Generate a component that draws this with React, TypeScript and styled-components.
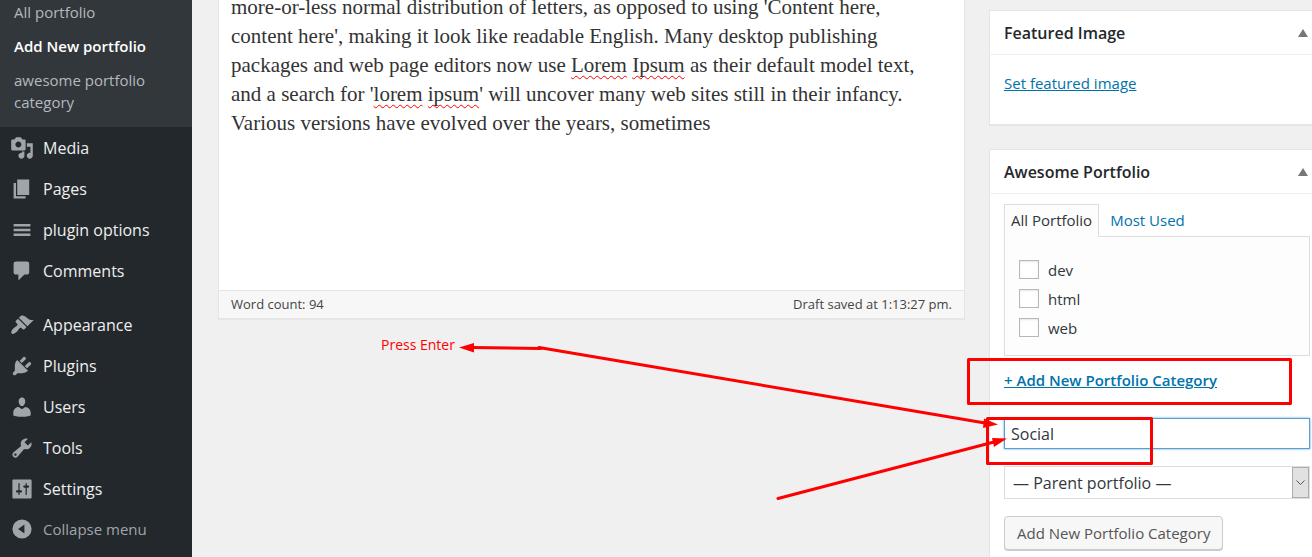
import React from "react";
import styled, { createGlobalStyle } from "styled-components";

const sans = `"Open Sans", "Noto Sans", sans-serif`;
const serif = `"Liberation Serif", Georgia, serif`;

const GlobalStyle = createGlobalStyle`
  * { box-sizing: border-box; }
  body { margin: 0; background: #f0f0f0; font-family: ${sans}; color: #32373c; overflow: hidden; }
  p, h2, ul { margin: 0; padding: 0; }
  ul { list-style: none; }
  button, input, select { font-family: inherit; margin: 0; }
`;

const Shell = styled.div`
  position: relative;
  display: flex;
  min-height: 100vh;
  overflow: hidden;
`;

const Sidebar = styled.nav`
  flex: none;
  width: 192px;
  background: #23282d;
`;

const Submenu = styled.ul`
  margin-top: -5px;
  padding-bottom: 8px;
  background: #32373c;
`;

const SubLink = styled.a<{ $current?: boolean }>`
  display: block;
  padding: 6px 14px;
  font-size: 15px;
  line-height: 22px;
  font-weight: ${(p) => (p.$current ? 600 : 400)};
  color: ${(p) => (p.$current ? "#fff" : "#b4b9be")};
  text-decoration: none;
`;

const MenuGroup = styled.ul`
  margin-bottom: 13px;
`;

const MenuLink = styled.a`
  display: flex;
  align-items: center;
  gap: 9px;
  height: 41px;
  padding: 0 10px;
  font-size: 16px;
  color: #eee;
  text-decoration: none;
`;

const CollapseButton = styled.button`
  display: flex;
  align-items: center;
  gap: 9px;
  width: 100%;
  height: 39px;
  padding: 0 10px;
  border: 0;
  background: none;
  font-size: 15px;
  color: #a0a5aa;
`;

const Icon = styled.svg`
  flex: none;
  width: 24px;
  height: 24px;
  fill: #a0a5aa;
`;

const Content = styled.main`
  flex: 1;
  display: flex;
  align-items: flex-start;
  gap: 24px;
  min-width: 0;
  padding-left: 26px;
`;

const Editor = styled.section`
  flex: 1;
  min-width: 0;
  border: 1px solid #e5e5e5;
  border-top: 0;
  background: #fff;
  box-shadow: 0 1px 1px rgba(0, 0, 0, 0.04);
`;

const EditorText = styled.div`
  min-height: 297px;
  margin-top: -7px;
  padding: 0 12px;
  font-family: ${serif};
  font-size: 21px;
  line-height: 29px;
  color: #333;
  white-space: nowrap;
`;

const Misspelt = styled.span`
  text-decoration: underline wavy #f00 1px;
  text-decoration-skip-ink: none;
  text-underline-offset: 3px;
`;

const StatusBar = styled.footer`
  display: flex;
  justify-content: space-between;
  padding: 0 12px;
  border-top: 1px solid #e5e5e5;
  background: #f7f7f7;
  font-size: 13px;
  line-height: 27px;
  color: #444;
`;

const Boxes = styled.aside`
  flex: none;
  display: flex;
  flex-direction: column;
  gap: 24px;
  width: 323px;
  padding-top: 10px;
`;

const Box = styled.section`
  border: 1px solid #e5e5e5;
  border-right: 0;
  background: #fff;
  box-shadow: 0 1px 1px rgba(0, 0, 0, 0.04);
`;

const BoxHeader = styled.header`
  display: flex;
  align-items: center;
  justify-content: space-between;
  height: 44px;
  padding: 0 3px 0 14px;
  border-bottom: 1px solid #eee;
`;

const BoxTitle = styled.h2`
  font-size: 16px;
  line-height: 24px;
  font-weight: 600;
  color: #23282d;
`;

const Toggle = styled.button`
  display: flex;
  padding: 0;
  border: 0;
  background: none;
`;

const FeaturedBody = styled.div`
  height: 69px;
  padding: 16px 14px;
  font-size: 15px;
  line-height: 24px;
`;

const BoxBody = styled.div`
  padding: 10px 2px 16px 14px;
`;

const Link = styled.a`
  color: #0073aa;
`;

const Tabs = styled.div`
  display: flex;
`;

const Tab = styled.button<{ $active?: boolean }>`
  height: 33px;
  margin-bottom: -1px;
  padding: 0 6px 2px;
  border: 1px solid ${(p) => (p.$active ? "#ddd" : "transparent")};
  border-bottom: 0;
  background: ${(p) => (p.$active ? "#fdfdfd" : "transparent")};
  font-size: 15px;
  color: ${(p) => (p.$active ? "#32373c" : "#0073aa")};
  position: relative;
  & + & { margin-left: 4px; }
`;

const Panel = styled.div`
  height: 120px;
  padding: 18px 14px 0;
  border: 1px solid #ddd;
  background: #fdfdfd;
`;

const Choice = styled.label`
  display: flex;
  align-items: center;
  gap: 9px;
  height: 29px;
  font-size: 15px;
`;

const Checkbox = styled.input`
  appearance: none;
  width: 20px;
  height: 19px;
  border: 1px solid #b4b9be;
  background: #fff;
  box-shadow: inset 0 1px 2px rgba(0, 0, 0, 0.1);
`;

const AddLine = styled.p`
  padding: 13px 0 26px;
  font-size: 15px;
  line-height: 23px;
  font-weight: 600;
`;

const NameInput = styled.input`
  display: block;
  width: 100%;
  height: 31px;
  padding: 0 6px;
  border: 1px solid #5b9dd9;
  outline: 0;
  background: #fff;
  box-shadow: 0 0 2px rgba(30, 140, 190, 0.8);
  font-size: 16px;
  color: #32373c;
`;

const SelectWrap = styled.div`
  display: grid;
  align-items: stretch;
  margin: 17px 0;
  border: 1px solid #ddd;
  background: #fff;
  & > * { grid-area: 1 / 1; }
`;

const Select = styled.select`
  appearance: none;
  height: 31px;
  padding: 0 24px 0 8px;
  border: 0;
  background: none;
  font-size: 16px;
  color: #32373c;
`;

const SelectArrow = styled.span`
  justify-self: end;
  display: flex;
  align-items: center;
  justify-content: center;
  width: 17px;
  border: 1px solid #adadad;
  background: #e1e1e1;
  pointer-events: none;
`;

const AddButton = styled.button`
  display: block;
  height: 34px;
  padding: 0 12px;
  border: 1px solid #ccc;
  border-radius: 4px;
  background: #f7f7f7;
  box-shadow: 0 1px 0 #ccc;
  font-size: 15px;
  color: #555;
`;

const Markup = styled.svg`
  position: absolute;
  top: 0;
  left: 0;
  width: 1312px;
  height: 557px;
  pointer-events: none;
`;

const Note = styled.span`
  position: absolute;
  top: 336px;
  left: 381px;
  font-size: 14px;
  line-height: 18px;
  color: #f00;
`;

const icons = {
  media:
    "M13 11V4c0-.55-.45-1-1-1h-1.67L9 1H5L3.67 3H2c-.55 0-1 .45-1 1v7c0 .55.45 1 1 1h10c.55 0 1-.45 1-1zM7 4.5c1.38 0 2.5 1.12 2.5 2.5S8.38 9.5 7 9.5 4.5 8.38 4.5 7 5.62 4.5 7 4.5zM14 6h5v10.5c0 1.38-1.12 2.5-2.5 2.5S14 17.88 14 16.5s1.12-2.5 2.5-2.5c.17 0 .34.02.5.05V9h-3V6zm-4 8.05V13h2v3.5c0 1.38-1.12 2.5-2.5 2.5S7 17.88 7 16.5 8.12 14 9.5 14c.17 0 .34.02.5.05z",
  pages: "M6 15V2h10v13H6zm-1 1h8v2H3V5h2v11z",
  menu: "M17 7V5H3v2h14zm0 4V9H3v2h14zm0 4v-2H3v2h14z",
  comments:
    "M5 2h9q.82 0 1.41.59T16 4v7q0 .82-.59 1.41T14 13h-2l-5 5v-5H5q-.82 0-1.41-.59T3 11V4q0-.82.59-1.41T5 2z",
  appearance:
    "M14.48 11.06L7.41 3.99l1.5-1.5c.5-.56 2.3-.47 3.51.32 1.21.8 1.43 1.28 2.91 2.1 1.18.64 2.45 1.26 4.45.85zm-.71.71L6.7 4.7 4.93 6.47c-.39.39-.39 1.02 0 1.41l1.06 1.06c.39.39.39 1.03 0 1.42-.6.6-1.43 1.11-2.21 1.69-.35.26-.7.53-1.01.84C1.43 14.23.4 16.08 1.4 17.07c.99 1 2.84-.03 4.18-1.36.31-.31.58-.66.85-1.02.57-.78 1.08-1.61 1.69-2.21.39-.39 1.02-.39 1.41 0l1.06 1.06c.39.39 1.02.39 1.41 0z",
  plugins:
    "M13.11 4.36L9.87 7.6 8 5.73l3.24-3.24c.35-.34 1.05-.2 1.56.32.52.51.66 1.21.31 1.55zm-8 1.77l.91-1.12 9.01 9.01-1.19.84c-.71.71-2.63 1.16-3.82 1.16H6.14L4.9 17.26c-.59.59-1.54.59-2.12 0-.59-.58-.59-1.53 0-2.12l1.24-1.24v-3.88c0-1.13.4-3.19 1.09-3.89zm7.26 3.97l3.24-3.24c.34-.35 1.04-.21 1.55.31.52.51.66 1.21.31 1.55l-3.24 3.25z",
  users:
    "M10 9.25c-2.27 0-2.73-3.44-2.73-3.44C7 4.02 7.82 2 9.97 2c2.16 0 2.98 2.02 2.71 3.81 0 0-.41 3.44-2.68 3.44zm0 2.57L12.72 10c2.39 0 4.52 2.33 4.52 4.53v2.49s-3.65 1.13-7.24 1.13c-3.65 0-7.24-1.13-7.24-1.13v-2.49c0-2.25 1.94-4.48 4.47-4.48z",
  tools:
    "M16.68 9.77c-1.34 1.34-3.3 1.67-4.95.99l-5.41 6.52c-.99.99-2.59.99-3.58 0s-.99-2.59 0-3.57l6.52-5.42c-.68-1.65-.35-3.61.99-4.95 1.28-1.28 3.12-1.62 4.72-1.06l-2.89 2.89 2.82 2.82 2.86-2.87c.53 1.58.18 3.39-1.08 4.65zM3.81 16.21c.4.39 1.04.39 1.43 0 .4-.4.4-1.04 0-1.43-.39-.4-1.03-.4-1.43 0-.39.39-.39 1.03 0 1.43z",
  settings:
    "M18 17V3c0-.55-.45-1-1-1H3c-.55 0-1 .45-1 1v14c0 .55.45 1 1 1h14c.55 0 1-.45 1-1zM8 11h1c.55 0 1 .45 1 1s-.45 1-1 1H8v1.5c0 .28-.22.5-.5.5s-.5-.22-.5-.5V13H6c-.55 0-1-.45-1-1s.45-1 1-1h1V5.5c0-.28.22-.5.5-.5s.5.22.5.5V11zm5-2h-1c-.55 0-1-.45-1-1s.45-1 1-1h1V5.5c0-.28.22-.5.5-.5s.5.22.5.5V7h1c.55 0 1 .45 1 1s-.45 1-1 1h-1v5.500c0 .28-.22.5-.5.5s-.5-.22-.5-.5V9z",
  collapse:
    "M10 2a8 8 0 1 0 0 16A8 8 0 1 0 10 2zM12 6.2v7.600L6.800 10z",
};

type IconName = keyof typeof icons;

const MenuIcon = ({ name }: { name: IconName }) => (
  <Icon viewBox="0 0 20 20" aria-hidden="true">
    <path d={icons[name]} fillRule="evenodd" />
  </Icon>
);

const contentMenu: [IconName, string][] = [
  ["media", "Media"],
  ["pages", "Pages"],
  ["menu", "plugin options"],
  ["comments", "Comments"],
];

const adminMenu: [IconName, string][] = [
  ["appearance", "Appearance"],
  ["plugins", "Plugins"],
  ["users", "Users"],
  ["tools", "Tools"],
  ["settings", "Settings"],
];

const MenuItems = ({ items }: { items: [IconName, string][] }) => (
  <>
    {items.map(([icon, label]) => (
      <li key={label}>
        <MenuLink href="#">
          <MenuIcon name={icon} />
          {label}
        </MenuLink>
      </li>
    ))}
  </>
);

const MetaBoxHeader = ({ title }: { title: string }) => (
  <BoxHeader>
    <BoxTitle>{title}</BoxTitle>
    <Toggle aria-label={`Toggle ${title}`}>
      <svg width="12" height="8" viewBox="0 0 12 8" fill="#72777c">
        <path d="M1 8L6 0l5 8z" />
      </svg>
    </Toggle>
  </BoxHeader>
);

export default function App() {
  return (
    <Shell>
      <GlobalStyle />
      <Sidebar>
        <Submenu>
          <li><SubLink href="#">All portfolio</SubLink></li>
          <li><SubLink href="#" $current>Add New portfolio</SubLink></li>
          <li><SubLink href="#">awesome portfolio category</SubLink></li>
        </Submenu>
        <MenuGroup>
          <MenuItems items={contentMenu} />
        </MenuGroup>
        <ul>
          <MenuItems items={adminMenu} />
        </ul>
        <CollapseButton>
          <MenuIcon name="collapse" />
          Collapse menu
        </CollapseButton>
      </Sidebar>

      <Content>
        <Editor>
          <EditorText>
            <p>
              more-or-less normal distribution of letters, as opposed to using 'Content here,<br />
              content here', making it look like readable English. Many desktop publishing<br />
              packages and web page editors now use <Misspelt>Lorem</Misspelt> <Misspelt>Ipsum</Misspelt> as their default model text,<br />
              and a search for '<Misspelt>lorem</Misspelt> <Misspelt>ipsum</Misspelt>' will uncover many web sites still in their infancy.<br />
              Various versions have evolved over the years, sometimes
            </p>
          </EditorText>
          <StatusBar>
            <span>Word count: 94</span>
            <span>Draft saved at 1:13:27 pm.</span>
          </StatusBar>
        </Editor>

        <Boxes>
          <Box>
            <MetaBoxHeader title="Featured Image" />
            <FeaturedBody>
              <Link href="#">Set featured image</Link>
            </FeaturedBody>
          </Box>
          <Box>
            <MetaBoxHeader title="Awesome Portfolio" />
            <BoxBody>
              <Tabs>
                <Tab $active>All Portfolio</Tab>
                <Tab>Most Used</Tab>
              </Tabs>
              <Panel>
                {["dev", "html", "web"].map((name) => (
                  <Choice key={name}>
                    <Checkbox type="checkbox" />
                    {name}
                  </Choice>
                ))}
              </Panel>
              <AddLine>
                <Link href="#">+ Add New Portfolio Category</Link>
              </AddLine>
              <NameInput type="text" aria-label="New category name" defaultValue="Social" />
              <SelectWrap>
                <Select aria-label="Parent portfolio">
                  <option>— Parent portfolio —</option>
                </Select>
                <SelectArrow>
                  <svg width="9" height="6" viewBox="0 0 9 6" fill="none" stroke="#555">
                    <path d="M.5 .5l4 4 4-4" />
                  </svg>
                </SelectArrow>
              </SelectWrap>
              <AddButton>Add New Portfolio Category</AddButton>
            </BoxBody>
          </Box>
        </Boxes>
      </Content>

      <Markup viewBox="0 0 1312 557" fill="none" stroke="#f00" strokeWidth="3" strokeLinejoin="round" strokeLinecap="round">
        <rect x="968.500" y="359.500" width="322" height="44" />
        <rect x="987.500" y="418.500" width="164" height="45" />
        <path d="M472 347.500L541 348.500M539 347.500L985 423M778 498.500L994 442" />
        <g fill="#f00" stroke="none">
          <path d="M459 347.500L474 343V352.500z" />
          <path d="M998 424.500L984 418.500L983 428z" />
          <path d="M1007 438.500L992 438L994 447z" />
        </g>
      </Markup>
      <Note>Press Enter</Note>
    </Shell>
  );
}
